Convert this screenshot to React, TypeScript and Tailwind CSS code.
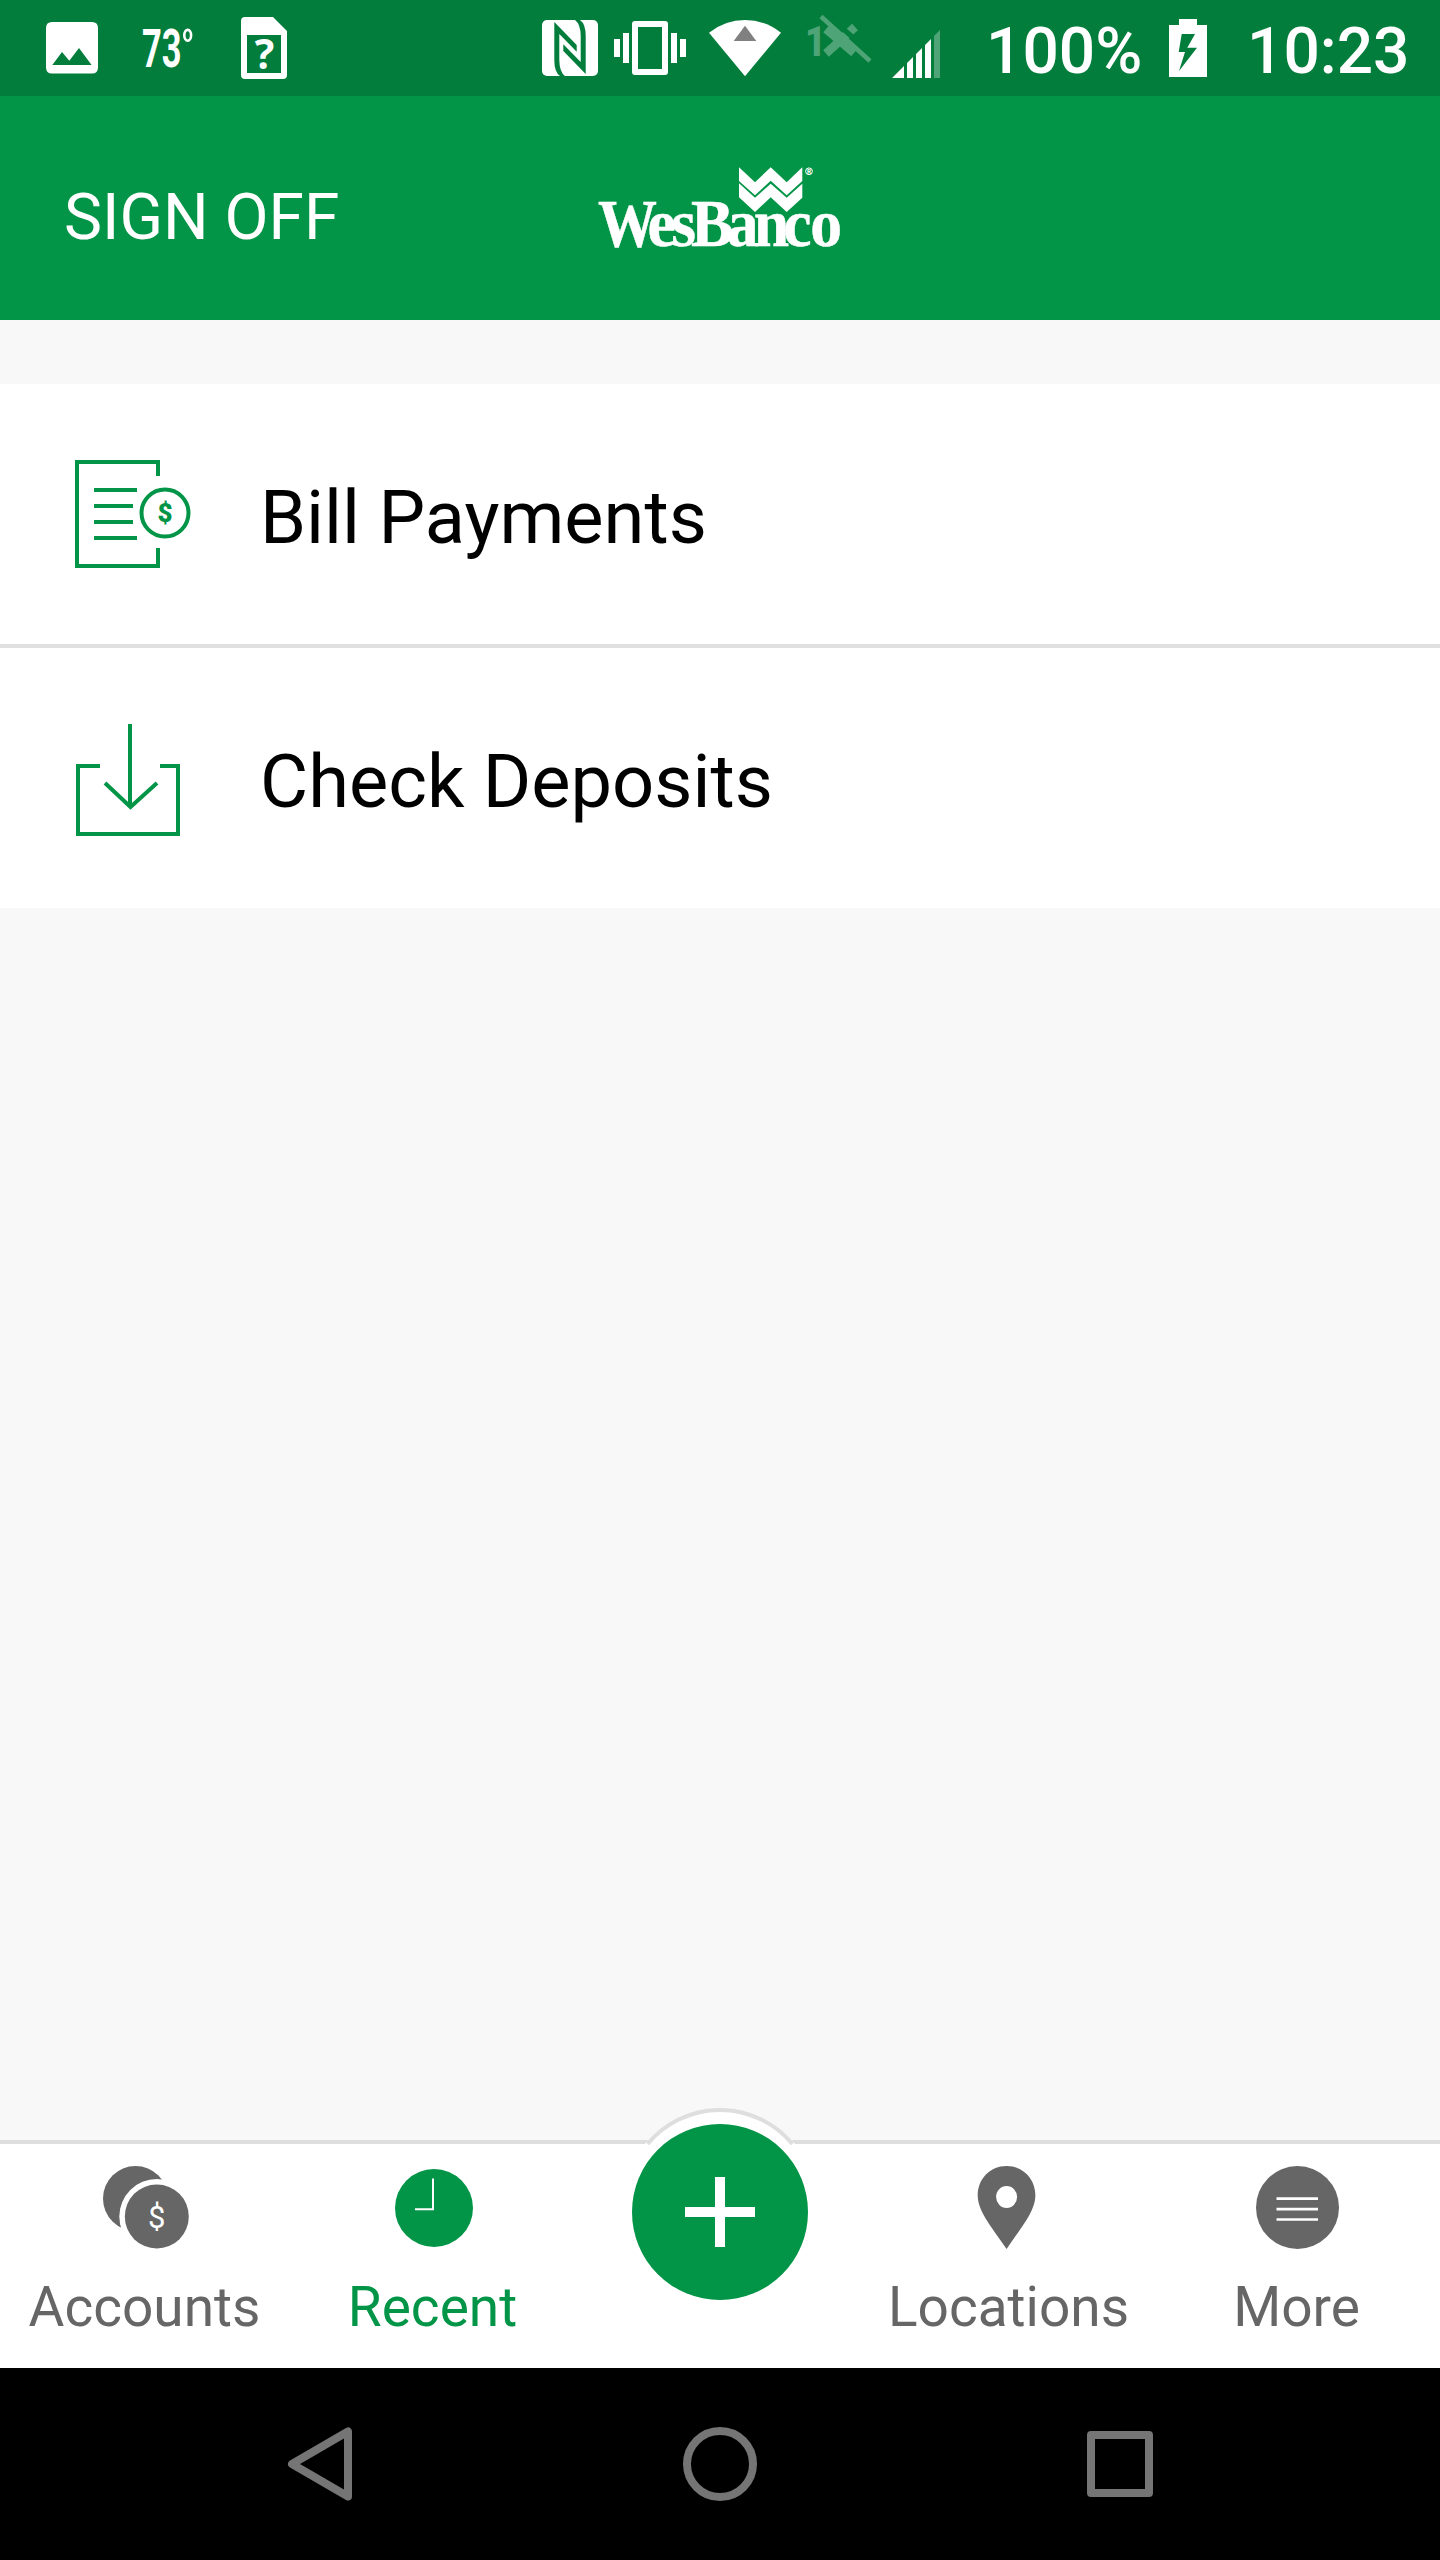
import React, { FC, ReactNode, useState } from "react";

const StatusBar: FC = () => {
  return (
    <div className="flex h-24 items-center bg-[#027d3b] pl-[46px] text-[64px] font-medium leading-none text-white">
      {/* notifications */}
      <svg className="h-24 w-[52px] shrink-0" viewBox="0 0 52 96" fill="white">
        <path fillRule="evenodd" d="M6 22H46Q52 22 52 28V67.5Q52 73.5 46 73.5H6Q0 73.5 0 67.5V28Q0 22 6 22ZM6.3 65H45.6L33 48L23.3 60.7L16 52Z" />
      </svg>
      <svg className="ml-[38px] h-24 w-[66px] shrink-0 overflow-visible" viewBox="-6 0 66 96" fill="white">
        <text x="0" y="67" fontSize="53" fontWeight="700" textLength="39.5" lengthAdjust="spacingAndGlyphs">73</text>
        <ellipse cx="45.7" cy="35.3" rx="3.4" ry="5.4" fill="none" stroke="white" strokeWidth="2.6" />
      </svg>
      <svg className="ml-[39px] h-24 w-[46px] shrink-0" viewBox="0 0 46 96" fill="white">
        <path fillRule="evenodd" d="M4 17H32L46 31V75Q46 79 42 79H4Q0 79 0 75V21Q0 17 4 17ZM6 35V73H40V35Z" />
        <text x="23.5" y="69" fontSize="41" fontWeight="700" fontFamily="Open Sans" textAnchor="middle">?</text>
      </svg>

      {/* radios */}
      <svg className="ml-[255px] h-24 w-[56px] shrink-0" viewBox="0 -20 56 96" fill="#027d3b">
        <rect width="56" height="56" rx="5" fill="white" />
        <path d="M12.3 2L34.7 25V31.7L17.3 14V40Q17.5 52 23 56H18Q12.3 52 12.3 40Z" />
        <path d="M43.7 54L21.3 31V24.3L38.7 42V16Q38.5 4 33 0H38Q43.7 4 43.7 16Z" />
      </svg>
      <svg className="ml-4 h-24 w-[72px] shrink-0" viewBox="0 0 72 96" fill="white">
        <path d="M0 39H6V57H0ZM9 33H15V63H9ZM57 33H63V63H57ZM66 39H72V57H66Z" />
        <path fillRule="evenodd" d="M21 21H51Q54 21 54 24V72Q54 75 51 75H21Q18 75 18 72V24Q18 21 21 21ZM24 27V69H48V27Z" />
      </svg>
      <svg className="ml-[23px] h-24 w-[72px] shrink-0" viewBox="0 0 72 96" fill="white">
        <path d="M0 32.7Q16 20 36 20Q56 20 72 32.7L36 76.3Z" />
        <path d="M36 25.7L47.3 41H24.7Z" fill="#808080" />
      </svg>
      <svg className="ml-[25px] h-24 w-[68px] shrink-0" viewBox="0 0 68 96" fill="none">
        <path d="M20 53.5L49 27" stroke="#4ea476" strokeWidth="8.5" />
        <path d="M20 29L48 53" stroke="#4ea476" strokeWidth="8.5" />
        <path d="M18 12L68 56" stroke="#027d3b" strokeWidth="5" />
        <path d="M15 16.5L64 61" stroke="#4ea476" strokeWidth="4.5" />
        <text x="-1" y="56" fontSize="43" fontWeight="900" fill="#4ea476" textLength="21" lengthAdjust="spacingAndGlyphs">1</text>
      </svg>
      <svg className="ml-[18px] h-24 w-[48px] shrink-0" viewBox="0 0 48 96" fill="white">
        <path d="M0 78L12 66V78ZM15 63L21 57V78H15ZM24 54L30 48V78H24ZM33 45L39 39V78H33Z" />
        <path d="M42 36L48 30V78H42Z" fill="#4ea476" />
      </svg>

      <span className="ml-[46px] w-[150px] whitespace-nowrap pt-2">100%</span>
      <svg className="ml-[33px] h-24 w-[38px] shrink-0" viewBox="0 0 38 96" fill="white">
        <path fillRule="evenodd" d="M10 19H28V25H38V77H0V25H10ZM12.7 34L9.7 52H16L10 71L28 47.7H18.3L26 34Z" />
      </svg>
      <span className="ml-[40px] whitespace-nowrap pt-2">10:23</span>
    </div>
  );
};

const Logo: FC = () => (
  <svg className="h-[120px] w-[264px] overflow-visible" viewBox="588 148 264 120" fill="white">
    <path d="M739 167.3L755 182.3L770.7 167.3L786.7 182.3L802.3 167.3V181L786.7 195.3L770.7 180.7L755 195.3L739 181Z" />
    <path d="M739 183.3L755 197.7L770.7 183.7L786.7 197.7L802.3 183.7V197.7L786.7 212L770.7 197.3L755 212L739 197.3Z" />
    <circle cx="809" cy="171.3" r="3.4" fill="none" stroke="white" />
    <text x="809" y="173.6" fontSize="6.5" fontWeight="700" textAnchor="middle">R</text>
    {/* the W is set narrower than the rest of the name */}
    <g fontSize="67" fontWeight="700" fontFamily="Liberation Serif" stroke="white" strokeWidth="0.5">
      <text transform="translate(598 246.3) scale(0.88 1)">W</text>
      <text transform="translate(598 246.3) scale(0.95 1)" x="52 77 98 135.5 164 195 223.5" y="0">
        esBanco
      </text>
    </g>
  </svg>
);

const BillIcon: FC = () => (
  <svg className="h-[108px] w-[120px]" viewBox="0 0 120 108" fill="none" stroke="#039547" strokeWidth="4">
    <path d="M83 16V2H2V106H83V88" />
    <path d="M19 30H62M19 46H58M19 62H58M19 78H62" />
    <circle cx="90" cy="53" r="23.5" />
    <text x="90" y="62" fontSize="26" fontWeight="900" textAnchor="middle" fill="#039547" stroke="none">$</text>
  </svg>
);

const DepositIcon: FC = () => (
  <svg className="mt-1 h-[112px] w-[120px]" viewBox="-1 0 120 112" fill="none" stroke="#039547" strokeWidth="4">
    <path d="M24 42H2V110H102V42H84" />
    <path d="M54 0V82" />
    <path d="M29 59L54.5 83L81 59" />
  </svg>
);

const AccountsIcon: FC = () => (
  <svg className="h-24 w-24" viewBox="96 2160 96 96" fill="#666666">
    <circle cx="135.5" cy="2198.5" r="32.5" />
    <circle cx="156.8" cy="2216.5" r="37.5" fill="white" />
    <circle cx="156.8" cy="2216.5" r="32" />
    <text x="156.8" y="2227.5" fontSize="31" textAnchor="middle" fill="white">$</text>
  </svg>
);

const RecentIcon: FC = () => (
  <svg className="h-24 w-24" viewBox="384 2160 96 96" fill="#039547">
    <circle cx="434" cy="2208" r="39" />
    <path d="M433 2178.5V2209.2H415" fill="none" stroke="white" strokeWidth="2" />
  </svg>
);

const LocationsIcon: FC = () => (
  <svg className="h-24 w-24" viewBox="960 2160 96 96" fill="#666666">
    <path
      fillRule="evenodd"
      d="M1006.6 2166C990 2166 977.7 2179 977.7 2195.5C977.7 2212 994 2230 1006.6 2249C1019 2230 1035.4 2212 1035.4 2195.5C1035.4 2179 1023 2166 1006.6 2166ZM1006.6 2186A10.5 11 0 1 1 1006.6 2208A10.5 11 0 1 1 1006.6 2186Z"
    />
  </svg>
);

const MoreIcon: FC = () => (
  <svg className="h-24 w-24" viewBox="1248 2160 96 96" fill="#666666">
    <circle cx="1297.5" cy="2207.5" r="41.5" />
    <path d="M1276.5 2198.7H1318M1276.5 2209.1H1318M1276.5 2219.5H1318" stroke="white" strokeWidth="2.7" />
  </svg>
);

interface RowProps {
  label: string;
  icon: ReactNode;
  className?: string;
}

const Row: FC<RowProps> = ({ label, icon, className }) => (
  <div className={`flex items-center bg-white pl-[75px] ${className || ""}`}>
    <div className="w-[185px]">{icon}</div>
    <span className="pt-[7px] text-[74px] leading-none text-black">{label}</span>
  </div>
);

interface TabProps {
  label: string;
  icon: ReactNode;
  active: boolean;
  onClick: () => void;
}

const Tab: FC<TabProps> = ({ label, icon, active, onClick }) => (
  <button
    onClick={onClick}
    className={`flex h-full w-[288px] flex-col items-center pt-4 text-[55px] leading-none ${
      active ? "text-[#039547]" : "text-[#666666]"
    }`}
  >
    {icon}
    <span className="mt-6 pl-px">{label}</span>
  </button>
);

const App: FC = () => {
  const [tab, setTab] = useState("Recent");

  return (
    <div className="flex h-[2560px] w-[1440px] flex-col bg-[#f8f8f8] font-['Roboto',sans-serif]">
      <StatusBar />

      <div className="grid h-56 grid-cols-3 items-center bg-[#039547]">
        <span className="pl-16 pt-5 text-[64px] leading-none text-white">SIGN OFF</span>
        <div className="flex justify-center">
          <Logo />
        </div>
      </div>

      <div className="mt-16 flex flex-col">
        <Row label="Bill Payments" icon={<BillIcon />} className="h-[264px] border-b-4 border-[#e0e0e0]" />
        <Row label="Check Deposits" icon={<DepositIcon />} className="h-[260px]" />
      </div>

      <div className="relative mt-auto flex h-[228px] border-t-4 border-[#dedede] bg-white">
        <Tab label="Accounts" icon={<AccountsIcon />} active={tab === "Accounts"} onClick={() => setTab("Accounts")} />
        <Tab label="Recent" icon={<RecentIcon />} active={tab === "Recent"} onClick={() => setTab("Recent")} />
        <div className="w-[288px]" />
        <Tab label="Locations" icon={<LocationsIcon />} active={tab === "Locations"} onClick={() => setTab("Locations")} />
        <Tab label="More" icon={<MoreIcon />} active={tab === "More"} onClick={() => setTab("More")} />

        {/* raised button, its rim only shows above the bar */}
        <svg className="absolute left-[624px] top-[-36px] h-[192px] w-[192px]" viewBox="0 0 192 192">
          <circle cx="96" cy="96" r="96" fill="white" />
          <path d="M23.6 36A94 94 0 0 1 168.4 36" fill="none" stroke="#dedede" strokeWidth="4" />
          <circle cx="96" cy="104" r="88" fill="#039547" />
          <path d="M61 104H131M96 69V139" stroke="white" strokeWidth="10" />
        </svg>
      </div>

      <div className="flex h-48 items-center justify-around bg-black px-[120px]">
        <svg className="h-[74px] w-[74px]" viewBox="0 0 74 74" fill="none" stroke="#757575" strokeWidth="8" strokeLinejoin="round">
          <path d="M65 4.5V69.5L9 37Z" />
        </svg>
        <svg className="h-[74px] w-[74px]" viewBox="0 0 74 74" fill="none" stroke="#757575" strokeWidth="8">
          <circle cx="37" cy="37" r="33" />
        </svg>
        <svg className="h-[74px] w-[74px]" viewBox="0 0 74 74" fill="none" stroke="#757575" strokeWidth="8" strokeLinejoin="round">
          <path d="M8 8H66V66H8Z" />
        </svg>
      </div>
    </div>
  );
};

export default App;
